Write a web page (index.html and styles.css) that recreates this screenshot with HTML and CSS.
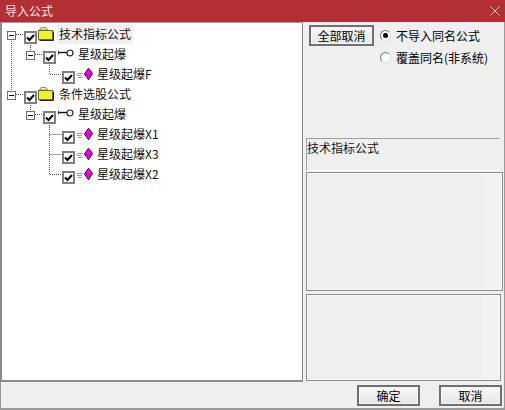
FILE: index.html
```html
<!DOCTYPE html>
<html lang="zh">
<head>
<meta charset="utf-8">
<title>导入公式</title>
<link rel="stylesheet" href="styles.css">
</head>
<body>
<svg class="defs" width="0" height="0" aria-hidden="true">
  <defs>
    <pattern id="dither" width="2" height="2" patternUnits="userSpaceOnUse">
      <rect width="2" height="2" fill="#ffff00"/>
      <rect width="1" height="1" fill="#e8e840"/>
      <rect x="1" y="1" width="1" height="1" fill="#e8e840"/>
    </pattern>
    <symbol id="check" viewBox="0 0 13 13">
      <rect x="0" y="0" width="13" height="13" fill="#fff" stroke="#808080" stroke-width="4"/>
      <path d="M3 6.5 L5.5 9 L10 4" fill="none" stroke="#000" stroke-width="2"/>
    </symbol>
    <symbol id="folder" viewBox="0 0 16 15">
      <path d="M1.5 4 L3 1.5 H8 L9.5 4 Z" fill="#f0f0d8" stroke="#8a8a70"/>
      <rect x="0.5" y="4.5" width="14" height="9" fill="url(#dither)" stroke="#6a6a50"/>
      <path d="M1.5 14.5 H15.5 V5.5" fill="none" stroke="#222"/>
    </symbol>
    <symbol id="key" viewBox="0 0 16 9">
      <path d="M1 3.5 H9.5" fill="none" stroke="#111" stroke-width="1.4"/>
      <path d="M0.5 2 V5.5" fill="none" stroke="#333"/>
      <circle cx="12" cy="4" r="3" fill="#fff" stroke="#222" stroke-width="1.2"/>
    </symbol>
    <symbol id="gem" viewBox="0 0 16 12">
      <path d="M0 5.5 H6 M0 7.5 H5 M1 9.5 H5" stroke="#9a9a9a" fill="none"/>
      <path d="M11.5 0.2 L15.6 5.5 L11.5 11.8 L7.4 6 Z" fill="#ff00e0" stroke="#30103a"/>
      <path d="M8.5 5.5 L11.5 8 L14 5" fill="none" stroke="#a800a8"/>
    </symbol>
  </defs>
</svg>
<div class="window">
  <header class="titlebar">
    <span class="title">导入公式</span>
    <svg class="close" width="10" height="10" viewBox="0 0 10 10"><path d="M0.5 0.5 L9.5 9.5 M9.5 0.5 L0.5 9.5" stroke="#e8c8c8" fill="none"/></svg>
  </header>
  <div class="main">
    <section class="tree">
      <svg class="lines" width="300" height="200" viewBox="2 23 300 200">
        <path d="M11.5 39 V90 M16 34.5 H24 M16 94.5 H24 M30.5 43 V50 M35 54.5 H43 M49.5 63 V74.5 H62 M30.5 103 V110 M35 114.5 H43 M49.5 123 V174.5 H62 M49.5 134.5 H62 M49.5 154.5 H62" fill="none" stroke="#555" stroke-dasharray="1 1"/>
      </svg>
      <div class="row lvl0">
        <span class="exp"></span>
        <svg class="cb"><use href="#check"/></svg>
        <svg class="ico-folder"><use href="#folder"/></svg>
        <span class="label selected">技术指标公式</span>
      </div>
      <div class="row lvl1">
        <span class="exp"></span>
        <svg class="cb"><use href="#check"/></svg>
        <svg class="ico-key"><use href="#key"/></svg>
        <span class="label">星级起爆</span>
      </div>
      <div class="row lvl2">
        <svg class="cb"><use href="#check"/></svg>
        <svg class="ico-gem"><use href="#gem"/></svg>
        <span class="label">星级起爆F</span>
      </div>
      <div class="row lvl0">
        <span class="exp"></span>
        <svg class="cb"><use href="#check"/></svg>
        <svg class="ico-folder"><use href="#folder"/></svg>
        <span class="label">条件选股公式</span>
      </div>
      <div class="row lvl1">
        <span class="exp"></span>
        <svg class="cb"><use href="#check"/></svg>
        <svg class="ico-key"><use href="#key"/></svg>
        <span class="label">星级起爆</span>
      </div>
      <div class="row lvl2">
        <svg class="cb"><use href="#check"/></svg>
        <svg class="ico-gem"><use href="#gem"/></svg>
        <span class="label">星级起爆X1</span>
      </div>
      <div class="row lvl2">
        <svg class="cb"><use href="#check"/></svg>
        <svg class="ico-gem"><use href="#gem"/></svg>
        <span class="label">星级起爆X3</span>
      </div>
      <div class="row lvl2">
        <svg class="cb"><use href="#check"/></svg>
        <svg class="ico-gem"><use href="#gem"/></svg>
        <span class="label">星级起爆X2</span>
      </div>
    </section>
    <aside class="side">
      <div class="controls">
        <button class="btn btn-all">全部取消</button>
        <div class="radios">
          <div class="radio"><span class="dot on"></span>不导入同名公式</div>
          <div class="radio"><span class="dot"></span>覆盖同名(非系统)</div>
        </div>
      </div>
      <div class="info">技术指标公式</div>
      <div class="panel panel-a"></div>
      <div class="panel panel-b"></div>
    </aside>
  </div>
  <footer class="footer">
    <button class="btn btn-foot">确定</button>
    <button class="btn btn-foot">取消</button>
  </footer>
</div>
</body>
</html>
```
FILE: styles.css
```css
* { box-sizing: border-box; }
html, body { margin: 0; padding: 0; }
body { width: 505px; height: 410px; overflow: hidden; font-family: "Noto Sans CJK SC", "Liberation Sans", sans-serif; font-size: 12px; color: #000; }
.defs { position: absolute; }
.window { width: 505px; height: 410px; display: flex; flex-direction: column; background: #efefef; border-bottom: 2px solid #999; border-left: 1px solid #999; border-right: 1px solid #999; }
.titlebar { height: 22px; margin: 0 -1px; flex: none; background: #b23035; color: #fff; display: flex; align-items: center; justify-content: space-between; padding: 0 5px 1px 5px; }
.title { font-size: 12px; line-height: 16px; color: #f6e6e6; }
.main { display: flex; height: 360px; flex: none; }
.tree { position: relative; width: 303px; margin-left: -1px; flex: none; background: #fff; border: 1px solid #8c8c8c; border-left-width: 2px; border-bottom-width: 2px; border-top-color: #a0a0a0; padding-top: 1px; }
.lines { position: absolute; left: 0; top: 0; pointer-events: none; }
.row { height: 20px; display: flex; align-items: center; position: relative; }
.lvl0 { padding-left: 5px; }
.lvl1 { padding-left: 24px; }
.lvl2 { padding-left: 60px; }
.exp { width: 9px; height: 9px; flex: none; margin-right: 8px; border: 1px solid #6e6e6e; background: linear-gradient(#000, #000) center / 5px 1px no-repeat #fff; position: relative; top: 1px; }
.cb { width: 13px; height: 13px; flex: none; position: relative; top: 3px; }
.ico-folder { width: 16px; height: 15px; flex: none; margin-left: 1px; position: relative; top: -1px; }
.ico-key { width: 16px; height: 9px; flex: none; margin-left: 2px; position: relative; top: -1px; }
.ico-gem { width: 16px; height: 12px; flex: none; margin-left: 2px; }
.label { line-height: 20px; margin-left: 4px; white-space: nowrap; color: #111; }
.lvl0 .label { margin-left: 5px; }
.lvl2 .label { margin-left: 4px; }
.lvl0 .selected { background: #f0f0f0; margin-left: 3px; padding: 0 2px; }
.side { flex: 1; display: flex; flex-direction: column; padding-left: 3px; min-width: 0; }
.controls { display: flex; height: 116px; padding: 3px 0 0 3px; flex: none; }
.btn { font: inherit; color: #000; padding: 0; border: 2px solid #707070; background: linear-gradient(#f8f8f8, #e6e6e6); box-shadow: inset 0 0 0 1px #f4f4f4; display: flex; align-items: center; justify-content: center; }
.btn-all { width: 65px; height: 21px; flex: none; }
.radios { display: flex; flex-direction: column; gap: 4px; margin-left: 6px; padding-top: 1px; }
.radio { height: 18px; display: flex; align-items: center; white-space: nowrap; }
.dot { width: 11px; height: 11px; margin-right: 5px; border-radius: 50%; background: #fff; border: 1px solid; border-color: #777 #ddd #ddd #777; display: flex; align-items: center; justify-content: center; }
.dot.on::after { content: ""; width: 5px; height: 5px; border-radius: 50%; background: #000; }
.info { height: 33px; width: 194px; flex: none; border: 1px solid; border-color: #a0a0a0 #efefef #fff #a0a0a0; padding: 1px 0 0 0; line-height: 16px; color: #111; }
.panel { flex: none; border: 1px solid #8c8c8c; box-shadow: inset 0 0 0 1px #f8f8f8; }
.panel-a { width: 197px; height: 119px; margin-top: 1px; background: linear-gradient(to right, #efefef 177px, #f3f2f0 177px); }
.panel-b { width: 195px; height: 87px; margin-top: 3px; background: linear-gradient(to right, #efefef 176px, #f3f2f0 176px); }
.footer { flex: 1; display: flex; justify-content: flex-end; gap: 19px; padding: 3px 2px 0 0; }
.btn-foot { width: 63px; height: 21px; }
```
